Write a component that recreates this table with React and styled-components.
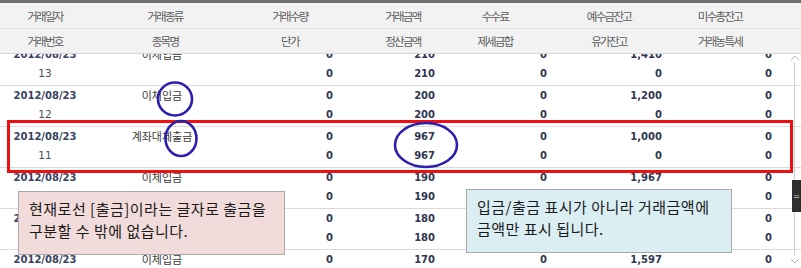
import React from "react";
import styled, { createGlobalStyle } from "styled-components";

const GlobalStyle = createGlobalStyle`
  html, body {
    margin: 0;
    padding: 0;
    background: #ffffff;
  }
  body {
    font-family: "Noto Sans CJK KR", "Noto Sans", sans-serif;
  }
`;

const Frame = styled.div`
  position: relative;
  width: 801px;
  height: 268px;
  overflow: hidden;
  background: #fff;
`;

const Header = styled.div`
  border-top: 3px solid #6e6e6e;
  background: #f2f2f2;
  border-bottom: 1px solid #d6d6d6;
`;

const HeadRow = styled.div`
  display: grid;
  grid-template-columns: 90px 150px 100px 126px 58px 170px 52px;
  height: ${({ $h }) => $h}px;
  align-items: center;
  border-bottom: ${({ $line }) => ($line ? "1px solid #dedede" : "none")};
`;

const HeadCell = styled.div`
  text-align: center;
  font-size: 11.5px;
  letter-spacing: -1.7px;
  color: #5c5c5c;
  white-space: nowrap;
`;

const Body = styled.div`
  height: 214px;
  overflow: hidden;
`;

const Scroller = styled.div`
  margin-top: ${({ $offset }) => -$offset}px;
`;

const Record = styled.div`
  border-bottom: 1px solid #dadada;
  padding-bottom: 2px;
`;

const Line = styled.div`
  display: grid;
  grid-template-columns: 90px 144px 109px 102px 112px 115px 110px;
  height: ${({ $h }) => $h}px;
  align-items: center;
`;

const DateCell = styled.div`
  text-align: center;
  font-family: "DejaVu Sans", sans-serif;
  font-weight: bold;
  font-size: 10px;
  color: #3a4262;
`;

const NoCell = styled.div`
  text-align: center;
  font-family: "DejaVu Sans", sans-serif;
  font-size: 10.5px;
  color: #4a4f63;
`;

const KindCell = styled.div`
  text-align: center;
  font-size: 11px;
  color: #3a3a3a;
`;

const NumCell = styled.div`
  text-align: right;
  padding-right: 10px;
  font-family: "DejaVu Sans", sans-serif;
  font-weight: bold;
  font-size: 10px;
  color: #2f3650;
`;

const Highlight = styled.div`
  position: absolute;
  left: 7px;
  top: 120px;
  width: 780px;
  height: 47px;
  border: 3px solid #ee1010;
`;

const Marks = styled.svg`
  position: absolute;
  left: 0;
  top: 0;
  pointer-events: none;
`;

const Note = styled.div`
  position: absolute;
  left: ${({ $x }) => $x}px;
  top: ${({ $y }) => $y}px;
  width: ${({ $w }) => $w}px;
  height: ${({ $h }) => $h}px;
  box-sizing: border-box;
  padding: 6px 0 0 10px;
  background: ${({ $bg }) => $bg};
  border: 1px solid #a9a9a9;
  font-size: 15px;
  letter-spacing: 0.5px;
  line-height: 22px;
  color: #1a1a1a;
  white-space: nowrap;
`;

const Track = styled.div`
  position: absolute;
  left: 794px;
  top: 62px;
  width: 1px;
  height: 194px;
  background: #cfcfcf;
`;

const Arrow = styled.svg`
  position: absolute;
  left: 790px;
  top: ${({ $y }) => $y}px;
`;

const Thumb = styled.div`
  position: absolute;
  left: 792px;
  top: 180px;
  width: 9px;
  height: 32px;
  background: #2f2f2f;
  display: flex;
  align-items: center;
  justify-content: center;
  color: #cfcfcf;
  font-family: "DejaVu Sans", sans-serif;
  font-size: 8px;
`;

const records = [
  { kind: "이체입금", no: 13, amt: "210", bal: "1,410" },
  { kind: "이체입금", no: 12, amt: "200", bal: "1,200" },
  { kind: "계좌대체출금", no: 11, amt: "967", bal: "1,000" },
  { kind: "이체입금", no: 10, amt: "190", bal: "1,967" },
  { kind: "이체입금", no: 9, amt: "180", bal: "1,777" },
  { kind: "이체입금", no: 8, amt: "170", bal: "1,597" },
];

const head1 = ["거래일자", "거래종류", "거래수량", "거래금액", "수수료", "예수금잔고", "미수총잔고"];
const head2 = ["거래번호", "종목명", "단가", "정산금액", "제세금합", "유가잔고", "거래농특세"];

export default function App() {
  return (
    <>
      <GlobalStyle />
      <Frame>
        <Header>
          <HeadRow $h={25} $line>
            {head1.map((t) => (
              <HeadCell key={t}>{t}</HeadCell>
            ))}
          </HeadRow>
          <HeadRow $h={24}>
            {head2.map((t) => (
              <HeadCell key={t}>{t}</HeadCell>
            ))}
          </HeadRow>
        </Header>
        <Body>
          <Scroller $offset={9}>
            {records.map((r) => (
              <Record key={r.no}>
                <Line $h={18}>
                  <DateCell>2012/08/23</DateCell>
                  <KindCell>{r.kind}</KindCell>
                  <NumCell>0</NumCell>
                  <NumCell>{r.amt}</NumCell>
                  <NumCell>0</NumCell>
                  <NumCell>{r.bal}</NumCell>
                  <NumCell>0</NumCell>
                </Line>
                <Line $h={20}>
                  <NoCell>{r.no}</NoCell>
                  <KindCell />
                  <NumCell>0</NumCell>
                  <NumCell>{r.amt}</NumCell>
                  <NumCell>0</NumCell>
                  <NumCell>0</NumCell>
                  <NumCell>0</NumCell>
                </Line>
              </Record>
            ))}
          </Scroller>
        </Body>

        <Track />
        <Arrow $y={55} width="10" height="6" viewBox="0 0 10 6">
          <path d="M1 5 L5 1 L9 5" fill="none" stroke="#b5b5b5" strokeWidth="1" />
        </Arrow>
        <Arrow $y={258} width="10" height="6" viewBox="0 0 10 6">
          <path d="M1 1 L5 5 L9 1" fill="none" stroke="#b5b5b5" strokeWidth="1" />
        </Arrow>
        <Thumb>=</Thumb>

        <Highlight />
        <Marks width="801" height="268" viewBox="0 0 801 268">
          <g fill="none" stroke="#2b1fae" strokeWidth="2.6">
            <ellipse cx="175" cy="99" rx="17" ry="16.5" />
            <ellipse cx="181" cy="138.5" rx="15.5" ry="17.5" />
            <ellipse cx="426" cy="145" rx="31" ry="22" />
          </g>
        </Marks>

        <Note $x={18} $y={191} $w={267} $h={64} $bg="#f2dcdb">
          현재로선 [출금]이라는 글자로 출금을
          <br />
          구분할 수 밖에 없습니다.
        </Note>
        <Note $x={466} $y={189} $w={266} $h={64} $bg="#dbeef3">
          입금/출금 표시가 아니라 거래금액에
          <br />
          금액만 표시 됩니다.
        </Note>
      </Frame>
    </>
  );
}
